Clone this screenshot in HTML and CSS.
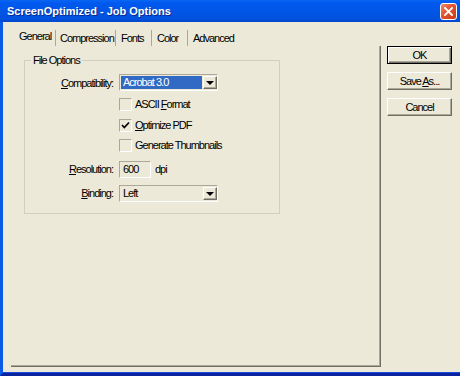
FILE: index.html
```html
<!DOCTYPE html>
<html>
<head>
<meta charset="utf-8">
<link rel="stylesheet" href="styles.css">
</head>
<body>
<div class="window">
  <div class="titlebar">
    <span class="title">ScreenOptimized - Job Options</span>
    <span class="close"><svg width="11" height="11" viewBox="0 0 11 11"><path d="M2 2 L9 9 M9 2 L2 9" stroke="#fff" stroke-width="1.8" stroke-linecap="square"/></svg></span>
  </div>
  <div class="client">
    <div class="main">
      <div class="tabs">
        <span class="tab tab-general selected">General</span>
        <span class="tab tab-compression">Compression</span>
        <span class="tab tab-fonts">Fonts</span>
        <span class="tab tab-color">Color</span>
        <span class="tab tab-advanced">Advanced</span>
      </div>
      <div class="panel">
        <div class="group">
          <span class="legend">File Options</span>
          <div class="form">
            <span class="lbl"><u>C</u>ompatibility:</span>
            <div class="combo">
              <span class="combo-text hl">Acrobat 3.0</span>
              <span class="combo-btn"><span class="arrow"></span></span>
            </div>

            <span></span>
            <div class="check"><span class="box"></span><span>ASCII <u>F</u>ormat</span></div>

            <span></span>
            <div class="check"><span class="box"><svg width="11" height="11" viewBox="0 0 11 11"><path d="M2 5 L4.3 7.5 L9 2.5" stroke="#000" stroke-width="1.7" fill="none"/></svg></span><span><u>O</u>ptimize PDF</span></div>

            <span></span>
            <div class="check"><span class="box"></span><span>Generate Thumbnails</span></div>

            <span class="lbl"><u>R</u>esolution:</span>
            <div class="res"><span class="input">600</span><span>dpi</span></div>

            <span class="lbl"><u>B</u>inding:</span>
            <div class="combo">
              <span class="combo-text">Left</span>
              <span class="combo-btn"><span class="arrow"></span></span>
            </div>
          </div>
        </div>
      </div>
    </div>
    <div class="buttons">
      <div class="btn default">OK</div>
      <div class="btn">Save <u>A</u>s...</div>
      <div class="btn">Cancel</div>
    </div>
  </div>
</div>
</body>
</html>
```

FILE: styles.css
```css
* { box-sizing: border-box; }
html, body { margin: 0; padding: 0; }
body {
  width: 460px;
  height: 376px;
  overflow: hidden;
  background: #ece9d8;
  font-family: "Liberation Sans", Arial, sans-serif;
  font-size: 11px;
  letter-spacing: -1px;
  color: #000;
}
u { text-decoration: underline; text-underline-offset: 1px; }

.window {
  width: 460px;
  height: 376px;
  display: flex;
  flex-direction: column;
}

.titlebar {
  height: 22px;
  flex: none;
  display: flex;
  align-items: center;
  justify-content: space-between;
  padding: 0 3px 0 7px;
  background: linear-gradient(#0a66f4 0%, #0058ee 15%, #0055e5 60%, #0050dc 90%, #0346c8 100%);
}
.title {
  color: #fff;
  font-weight: bold;
  font-size: 11px;
  letter-spacing: 0;
  text-shadow: 1px 1px 0 #0a2a8c;
}
.close {
  width: 17px;
  height: 17px;
  border: 1px solid #fff;
  border-radius: 3px;
  background: linear-gradient(135deg, #f08a6a 0%, #e2532d 45%, #c83c16 100%);
  display: flex;
  align-items: center;
  justify-content: center;
}

.client {
  flex: 1;
  display: flex;
  border-left: 3px solid #0a5ae8;
  border-bottom: 3px solid #0a24a0;
  box-shadow: inset 0 -1px 0 #1a48d8;
}

.main {
  margin-left: 8px;
  width: 370px;
  display: flex;
  flex-direction: column;
}

.tabs {
  height: 24px;
  padding-top: 8px;
  display: flex;
}
.tab {
  height: 16px;
  line-height: 16px;
  padding-left: 4px;
  border-right: 1px solid #aca899;
  white-space: nowrap;
}
.tab.selected { line-height: 12px; }
.tab-general { width: 45px; padding-left: 8px; }
.tab-compression { width: 60px; }
.tab-fonts { width: 36px; padding-left: 5px; }
.tab-color { width: 36px; padding-left: 5px; }
.tab-advanced { border-right: none; padding-left: 5px; }

.panel {
  flex: 1;
  margin-bottom: 6px;
  border-right: 1px solid #716f64;
  border-bottom: 1px solid #716f64;
  box-shadow: inset -1px -1px 0 #aca899;
}

.group {
  position: relative;
  margin: 14px 0 0 13px;
  width: 256px;
  height: 154px;
  border: 1px solid #d0d0bf;
}
.legend {
  position: absolute;
  top: -7px;
  left: 6px;
  padding: 0 2px;
  line-height: 13px;
  background: #ece9d8;
}

.form {
  display: grid;
  grid-template-columns: 88px auto;
  grid-template-rows: 19px 24px 18px 22px 26px 22px;
  column-gap: 6px;
  padding-top: 12px;
  align-items: center;
}
.lbl { justify-self: end; white-space: nowrap; }

.combo {
  width: 99px;
  height: 17px;
  display: flex;
  gap: 1px;
  padding: 1px 0 1px 1px;
  border-top: 1px solid #aca899;
  border-left: 1px solid #aca899;
  border-bottom: 1px solid #fff;
  border-right: 1px solid #fff;
}
.combo-text {
  width: 82px;
  height: 13px;
  line-height: 13px;
  padding-left: 2px;
  white-space: nowrap;
}
.combo-text.hl { background: #316ac5; color: #fff; }
.combo-btn {
  width: 14px;
  height: 13px;
  border-top: 1px solid #fff;
  border-left: 1px solid #fff;
  border-right: 1px solid #716f64;
  border-bottom: 1px solid #716f64;
  box-shadow: inset -1px -1px 0 #aca899;
  display: flex;
  align-items: center;
  justify-content: center;
}
.arrow {
  width: 0;
  height: 0;
  border-left: 4px solid transparent;
  border-right: 4px solid transparent;
  border-top: 4px solid #000;
  margin-top: 1px;
}

.check {
  display: flex;
  align-items: center;
  gap: 3px;
  white-space: nowrap;
}
.box {
  width: 13px;
  height: 13px;
  border-top: 1px solid #aca899;
  border-left: 1px solid #aca899;
  border-bottom: 1px solid #fff;
  border-right: 1px solid #fff;
  display: flex;
  align-items: center;
  justify-content: center;
}

.res {
  display: flex;
  align-items: center;
  gap: 4px;
}
.input {
  width: 32px;
  height: 17px;
  line-height: 15px;
  padding-left: 3px;
  border-top: 1px solid #aca899;
  border-left: 1px solid #aca899;
  border-bottom: 1px solid #fff;
  border-right: 1px solid #fff;
}

.buttons {
  margin: 24px 0 0 6px;
  display: flex;
  flex-direction: column;
  gap: 8px;
}
.btn {
  width: 65px;
  height: 18px;
  line-height: 16px;
  text-align: center;
  border-top: 1px solid #fff;
  border-left: 1px solid #fff;
  border-right: 1px solid #716f64;
  border-bottom: 1px solid #716f64;
  box-shadow: inset -1px -1px 0 #aca899;
  white-space: nowrap;
}
.btn.default {
  border: 1px solid #000;
  box-shadow: inset 1px 1px 0 #fff, inset -1px -1px 0 #716f64, inset -2px -2px 0 #aca899;
}
```
